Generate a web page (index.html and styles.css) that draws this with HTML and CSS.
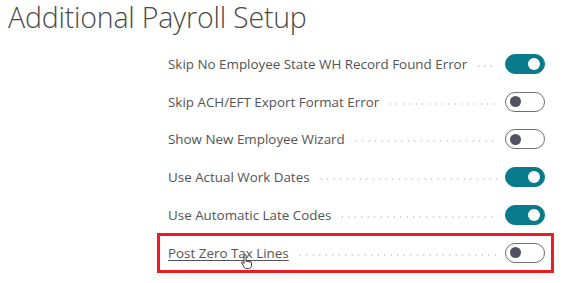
FILE: index.html
```html
<!DOCTYPE html>
<html>
<head>
<meta charset="utf-8">
<link rel="stylesheet" href="styles.css">
</head>
<body>
<h1 class="title">Additional Payroll Setup</h1>
<div class="fields">
  <div class="row"><span class="label">Skip No Employee State WH Record Found Error</span><span class="leader"></span><span class="toggle on"><span class="knob"></span></span></div>
  <div class="row"><span class="label">Skip ACH/EFT Export Format Error</span><span class="leader"></span><span class="toggle"><span class="knob"></span></span></div>
  <div class="row"><span class="label">Show New Employee Wizard</span><span class="leader"></span><span class="toggle"><span class="knob"></span></span></div>
  <div class="row"><span class="label">Use Actual Work Dates</span><span class="leader"></span><span class="toggle on"><span class="knob"></span></span></div>
  <div class="row"><span class="label">Use Automatic Late Codes</span><span class="leader"></span><span class="toggle on"><span class="knob"></span></span></div>
  <div class="row highlight"><span class="label link">Post Zero Tax Lines</span><span class="leader"></span><span class="toggle"><span class="knob"></span></span>
    <svg class="cursor" width="12" height="16" viewBox="0 0 12 16"><path d="M3 1.5v8l-1.2-1.3c-.6-.6-1.5-.2-1.2.6l2.4 4.2c.5.9 1.4 1.5 2.5 1.5h2.2c1.6 0 2.8-1.2 2.8-2.8V8.5c0-.5-.4-.9-.9-.9s-.9.4-.9.9V8c0-.5-.4-.9-.9-.9s-.9.4-.9.9v-.3c0-.5-.4-.9-.9-.9s-.9.4-.9.9V1.5c0-.5-.4-.9-.9-.9S3 1 3 1.5z" fill="#fff" stroke="#222" stroke-width=".9"/></svg>
  </div>
</div>
</body>
</html>
```
FILE: styles.css
```css
html, body {
  margin: 0;
  padding: 0;
  background: #ffffff;
}
body {
  width: 567px;
  height: 283px;
  overflow: hidden;
  font-family: "Open Sans", "Noto Sans", sans-serif;
}
.title {
  margin: 0;
  padding: 0 0 0 8px;
  font-family: "Open Sans", sans-serif;
  font-weight: 300;
  font-size: 28.5px;
  line-height: 34px;
  height: 34px;
  color: #4a4a4a;
  letter-spacing: -0.2px;
  white-space: nowrap;
}
.fields {
  display: flex;
  flex-direction: column;
  margin-top: 11px;
  padding-left: 168px;
  width: 377px;
}
.row {
  position: relative;
  display: flex;
  align-items: center;
  height: 37.8px;
}
.label {
  font-size: 13.4px;
  color: #545454;
  white-space: nowrap;
}
.label.link {
  text-decoration: underline;
  text-underline-offset: 2px;
  text-decoration-thickness: 1px;
}
.leader {
  flex: 1;
  height: 2px;
  margin: 4px 8px 0 8px;
  background-image: radial-gradient(circle, #c8c8c8 0.8px, transparent 1px);
  background-size: 6.5px 2px;
  background-repeat: repeat-x;
}
.toggle {
  box-sizing: border-box;
  flex: none;
  width: 40px;
  height: 20px;
  border-radius: 10px;
  border: 1.5px solid #707070;
  background: #fff;
  display: flex;
  align-items: center;
  padding: 0 4px;
}
.toggle .knob {
  width: 11px;
  height: 11px;
  border-radius: 50%;
  background: #4f5260;
}
.toggle.on {
  background: #087a8b;
  border-color: #087a8b;
  justify-content: flex-end;
}
.toggle.on .knob {
  background: #fff;
  width: 12px;
  height: 12px;
}
.highlight::after {
  content: "";
  position: absolute;
  left: -11px;
  right: -9px;
  top: -1px;
  bottom: -1px;
  border: 3px solid #ed1c24;
  pointer-events: none;
}
.cursor {
  position: absolute;
  left: 73px;
  top: 20px;
}
```
